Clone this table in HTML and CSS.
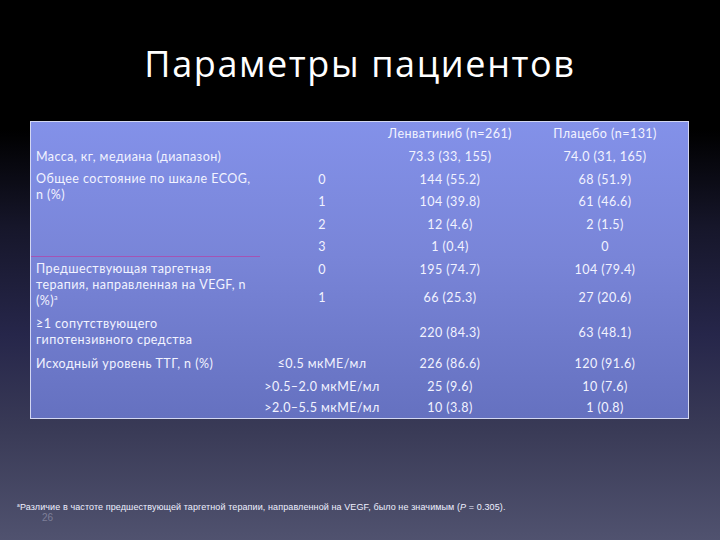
FILE: index.html
```html
<!DOCTYPE html>
<html lang="ru">
<head>
<meta charset="utf-8">
<title>Параметры пациентов</title>
<link rel="stylesheet" href="styles.css">
</head>
<body>
<div class="slide">
  <header class="head"><h1 class="title">Параметры пациентов</h1></header>
  <div class="box">
    <div class="grid">
      <div class="c lab r1"></div>
      <div class="c sub r1"></div>
      <div class="c val r1">Ленватиниб (n=261)</div>
      <div class="c val r1">Плацебо (n=131)</div>

      <div class="c lab mid"><span>Масса, кг, медиана (диапазон)</span></div>
      <div class="c sub"></div>
      <div class="c val">73.3 (33, 155)</div>
      <div class="c val">74.0 (31, 165)</div>

      <div class="c lab top ecog"><span>Общее состояние по шкале ECOG,<br>n (%)</span></div>
      <div class="c sub">0</div>
      <div class="c val">144 (55.2)</div>
      <div class="c val">68 (51.9)</div>
      <div class="c sub">1</div>
      <div class="c val">104 (39.8)</div>
      <div class="c val">61 (46.6)</div>
      <div class="c sub">2</div>
      <div class="c val">12 (4.6)</div>
      <div class="c val">2 (1.5)</div>
      <div class="c sub">3</div>
      <div class="c val">1 (0.4)</div>
      <div class="c val">0</div>

      <div class="c lab top vegf"><span>Предшествующая таргетная<br>терапия, направленная на VEGF, n<br>(%)<sup>a</sup></span></div>
      <div class="c sub">0</div>
      <div class="c val">195 (74.7)</div>
      <div class="c val">104 (79.4)</div>
      <div class="c sub">1</div>
      <div class="c val">66 (25.3)</div>
      <div class="c val">27 (20.6)</div>

      <div class="c lab mid"><span>≥1 сопутствующего<br>гипотензивного средства</span></div>
      <div class="c sub"></div>
      <div class="c val">220 (84.3)</div>
      <div class="c val">63 (48.1)</div>

      <div class="c lab mid ttg"><span>Исходный уровень ТТГ, n (%)</span></div>
      <div class="c sub">≤0.5 мкМЕ/мл</div>
      <div class="c val">226 (86.6)</div>
      <div class="c val">120 (91.6)</div>
      <div class="c sub">&gt;0.5–2.0 мкМЕ/мл</div>
      <div class="c val">25 (9.6)</div>
      <div class="c val">10 (7.6)</div>
      <div class="c sub">&gt;2.0–5.5 мкМЕ/мл</div>
      <div class="c val">10 (3.8)</div>
      <div class="c val">1 (0.8)</div>
    </div>
  </div>
  <p class="note"><sup>a</sup>Различие в частоте предшествующей таргетной терапии, направленной на VEGF, было не значимым (<i>P</i> = 0.305).</p>
  <div class="page">26</div>
</div>
</body>
</html>
```

FILE: styles.css
```css
html, body {
  margin: 0;
  padding: 0;
  background: #000;
}

.slide {
  width: 720px;
  height: 540px;
  overflow: hidden;
  background: linear-gradient(to bottom, #000 0%, #000 24%, #16162a 42%, #26264a 62%, #3a3b57 80%, #50526f 100%);
  font-family: "Lato", "Liberation Sans", sans-serif;
  color: #f2f3ff;
}

.head {
  height: 121px;
  box-sizing: border-box;
  padding-top: 42px;
}

.title {
  margin: 0;
  text-align: center;
  font-family: "Open Sans", "Liberation Sans", sans-serif;
  font-weight: 400;
  font-size: 36px;
  line-height: 44px;
  letter-spacing: 1.6px;
  color: #fff;
}

.box {
  margin-left: 30px;
  width: 657px;
  border: 1px solid #d3d7f2;
  background: linear-gradient(to bottom, #8391e9 0%, #7985d8 45%, #6571c0 100%);
}

.grid {
  display: grid;
  grid-template-columns: 231px 116px 144px 166px;
  grid-template-rows: 23px 23px 22px 23px 22px 22px 25px 30px 40px 23px 22px 21px;
  font-size: 12.5px;
  letter-spacing: 0.45px;
}

.c {
  display: flex;
  align-items: center;
  justify-content: center;
  white-space: nowrap;
}

.lab {
  grid-column: 1;
  justify-content: flex-start;
  padding-left: 5px;
  line-height: 16px;
}

.top {
  align-items: flex-start;
}

.ecog {
  grid-row: 3 / span 4;
  padding-top: 3px;
  border-bottom: 1px solid #a454b4;
  margin-right: 2px;
}

.vegf {
  grid-row: 7 / span 2;
  padding-top: 4px;
}

.sub {
  grid-column: 2;
  padding-left: 4px;
}

sup {
  font-size: 7px;
  line-height: 0;
  vertical-align: 5px;
}

.note {
  margin: 83px 0 0 17px;
  font-family: "Liberation Sans", sans-serif;
  font-size: 9px;
  line-height: 10px;
  letter-spacing: 0.1px;
  color: #eef0ff;
  white-space: nowrap;
}

.note sup {
  font-size: 5px;
  vertical-align: 3px;
}

.page {
  margin: 0 0 0 42px;
  font-family: "Liberation Sans", sans-serif;
  font-size: 10px;
  line-height: 11px;
  color: #7e7f99;
}
```
